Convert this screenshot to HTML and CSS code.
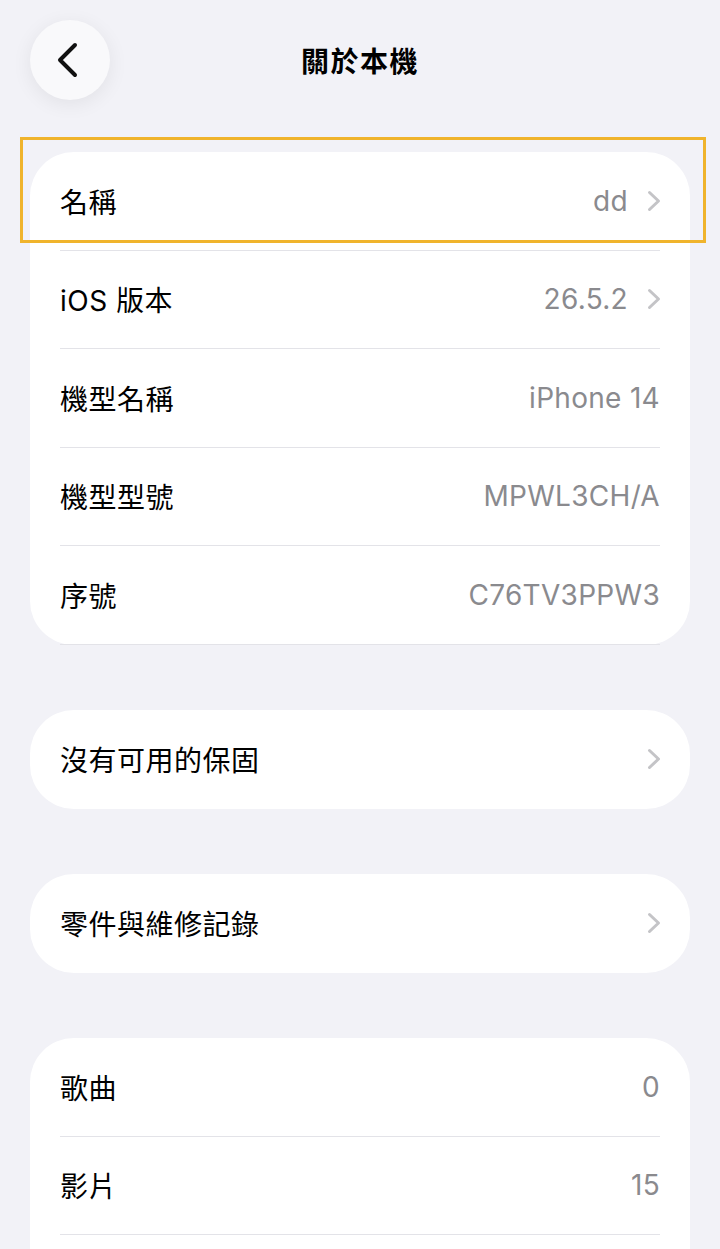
FILE: index.html
```html
<!DOCTYPE html>
<html lang="zh-Hant">
<head>
  <meta charset="UTF-8">
  <meta name="viewport" content="width=device-width, initial-scale=1.0">
  <title>關於本機</title>
  <link rel="stylesheet" href="styles.css">
</head>
<body>
  <div class="screen">
    <header class="nav-bar">
      <button class="back-button" aria-label="返回">
        <svg width="26" height="36" viewBox="0 0 26 36"><path d="M20 3 L5 18 L20 33" fill="none" stroke="#111" stroke-width="4" stroke-linecap="round" stroke-linejoin="round"/></svg>
      </button>
      <h1 class="nav-title">關於本機</h1>
    </header>

    <!-- Device info -->
    <div class="group">
      <div class="row">
        <span class="label">名稱</span>
        <span class="value">dd</span>
        <svg class="chevron" width="14" height="22" viewBox="0 0 14 22"><path d="M2.5 2.5 L11.5 11 L2.5 19.5" fill="none" stroke="#c4c4c7" stroke-width="3" stroke-linecap="round" stroke-linejoin="round"/></svg>
      </div>
      <div class="row">
        <span class="label">iOS 版本</span>
        <span class="value">26.5.2</span>
        <svg class="chevron" width="14" height="22" viewBox="0 0 14 22"><path d="M2.5 2.5 L11.5 11 L2.5 19.5" fill="none" stroke="#c4c4c7" stroke-width="3" stroke-linecap="round" stroke-linejoin="round"/></svg>
      </div>
      <div class="row">
        <span class="label">機型名稱</span>
        <span class="value">iPhone 14</span>
      </div>
      <div class="row">
        <span class="label">機型型號</span>
        <span class="value">MPWL3CH/A</span>
      </div>
      <div class="row">
        <span class="label">序號</span>
        <span class="value">C76TV3PPW3</span>
      </div>
      <div class="highlight"></div>
    </div>

    <div class="group">
      <div class="row">
        <span class="label">沒有可用的保固</span>
        <svg class="chevron" width="14" height="22" viewBox="0 0 14 22"><path d="M2.5 2.5 L11.5 11 L2.5 19.5" fill="none" stroke="#c4c4c7" stroke-width="3" stroke-linecap="round" stroke-linejoin="round"/></svg>
      </div>
    </div>

    <div class="group">
      <div class="row">
        <span class="label">零件與維修記錄</span>
        <svg class="chevron" width="14" height="22" viewBox="0 0 14 22"><path d="M2.5 2.5 L11.5 11 L2.5 19.5" fill="none" stroke="#c4c4c7" stroke-width="3" stroke-linecap="round" stroke-linejoin="round"/></svg>
      </div>
    </div>

    <div class="group">
      <div class="row">
        <span class="label">歌曲</span>
        <span class="value">0</span>
      </div>
      <div class="row">
        <span class="label">影片</span>
        <span class="value">15</span>
      </div>
      <div class="row"></div>
    </div>
  </div>
</body>
</html>
```

FILE: styles.css
```css
/* Base */
html, body { margin: 0; padding: 0; }
body {
  background-color: #f2f2f7;
  color: #000;
  font-family: Inter, "Noto Sans CJK TC", sans-serif;
  overflow: hidden;
}
.screen {
  height: 1249px;
  padding: 0 30px;
  overflow: hidden;
}

/* Navigation */
.nav-bar {
  position: relative;
  height: 120px;
  padding-bottom: 32px;
  display: flex;
  align-items: center;
  justify-content: center;
}
.back-button {
  position: absolute;
  left: 0;
  top: 20px;
  width: 80px;
  height: 80px;
  border: none;
  border-radius: 50%;
  background-color: #f9f9fb;
  box-shadow: 0 4px 20px rgba(0,0,0,0.07);
  display: flex;
  align-items: center;
  justify-content: center;
  padding: 0 4px 0 0;
}
.nav-title {
  margin: 0;
  font-size: 28px;
  font-weight: 700;
  letter-spacing: 1.5px;
}

/* Groups */
.group {
  position: relative;
  background-color: #fff;
  border-radius: 44px;
  padding: 0 30px;
  margin-bottom: 65.5px;
}
.row {
  box-sizing: border-box;
  display: flex;
  align-items: center;
  height: 98.5px;
  border-bottom: 1.5px solid #e3e3e8;
  font-size: 28px;
}
.row:last-of-type { border-bottom: none; }
.label { flex: 1; letter-spacing: 0.5px; }
.value { color: #8a8a8e; letter-spacing: 0.3px; }
.chevron { margin: 0 -1px 0 19px; flex-shrink: 0; }

/* Selection outline over first row */
.highlight {
  position: absolute;
  left: -10px;
  right: -16px;
  top: -15px;
  height: 100px;
  border: 3px solid #f0b42c;
  pointer-events: none;
}
```
